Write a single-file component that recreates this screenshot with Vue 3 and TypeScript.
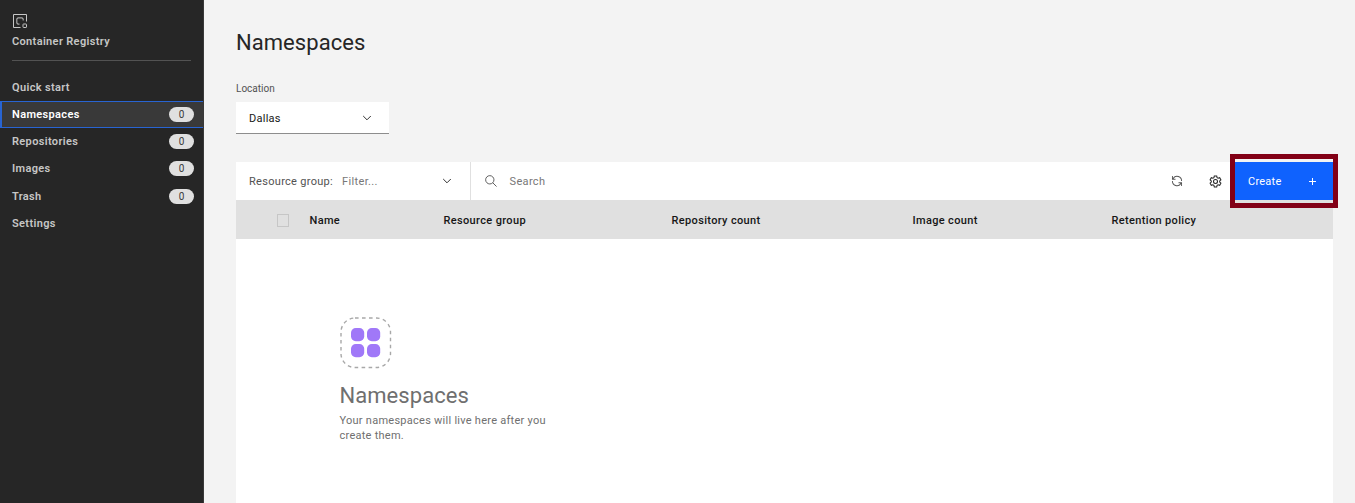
<script setup lang="ts">
interface NavItem {
  label: string
  count?: number
  active?: boolean
}

const navItems: NavItem[] = [
  { label: 'Quick start' },
  { label: 'Namespaces', count: 0, active: true },
  { label: 'Repositories', count: 0 },
  { label: 'Images', count: 0 },
  { label: 'Trash', count: 0 },
  { label: 'Settings' },
]

const columns: string[] = ['Name', 'Resource group', 'Repository count', 'Image count', 'Retention policy']
</script>

<template>
  <div class="shell">
    <aside class="sidebar">
      <header class="brand">
        <svg class="brand-icon" width="16" height="16" viewBox="0 0 16 16" fill="none" stroke="#c6c6c6">
          <path d="M8.5 14.5H1.5V1.5H14.5V8.5" />
          <path d="M7.5 11.2H6L4.8 10V6L6 4.8H10L11.2 6V7.5" stroke="#a8a8a8" stroke-width="1.2" />
          <rect x="11" y="11" width="3.5" height="3.5" rx=".6" />
        </svg>
        <div class="brand-name">Container Registry</div>
      </header>
      <nav class="nav">
        <a v-for="item in navItems" :key="item.label" class="nav-item" :class="{ active: item.active }">
          <span>{{ item.label }}</span>
          <span v-if="item.count !== undefined" class="count">{{ item.count }}</span>
        </a>
      </nav>
    </aside>

    <main class="content">
      <h1 class="title">Namespaces</h1>
      <label class="field-label">Location</label>
      <div class="dropdown">
        <span>Dallas</span>
        <svg width="10" height="6" viewBox="0 0 10 6" fill="none" stroke="#333"><path d="M1.2 1 5 4.8 8.8 1" /></svg>
      </div>

      <section class="table">
        <div class="toolbar">
          <div class="filter">
            <span class="filter-label">Resource group:</span>
            <span class="placeholder">Filter...</span>
            <svg class="filter-chevron" width="10" height="6" viewBox="0 0 10 6" fill="none" stroke="#333"><path d="M1.2 1 5 4.8 8.8 1" /></svg>
          </div>
          <div class="search">
            <svg width="12" height="12" viewBox="0 0 13 13" fill="none" stroke="#525252">
              <circle cx="5.2" cy="5.2" r="4.5" />
              <path d="M8.4 8.4 12.5 12.5" />
            </svg>
            <span class="placeholder">Search</span>
          </div>
          <svg class="refresh" width="12" height="12" viewBox="0 0 32 32" fill="#555">
            <path d="M12 10H6.78A11 11 0 0 1 27 16h2.4A13.4 13.4 0 0 0 5 7.9V2.5H2.6V12.4H12zM20 22h5.22A11 11 0 0 1 5 16H2.6A13.4 13.4 0 0 0 27 24.1v5.4h2.4V19.6H20z" />
          </svg>
          <svg class="gear" width="13" height="13" viewBox="0 0 13 13" fill="none" stroke="#262626" stroke-width="1.05">
            <path d="M5.3 1h2.4l.4 1.6 1 .6 1.6-.5 1.2 2.1-1.2 1.1v1.2l1.2 1.1-1.2 2.1-1.6-.5-1 .6-.4 1.6H5.3l-.4-1.6-1-.6-1.6.5-1.2-2.1 1.2-1.1V5.9L1.1 4.8l1.2-2.1 1.6.5 1-.6z" />
            <circle cx="6.5" cy="6.5" r="2" />
          </svg>
          <button class="create">
            <span>Create</span>
            <svg width="7" height="7" viewBox="0 0 7 7" fill="none" stroke="#fff"><path d="M3.5 0v7M0 3.5h7" /></svg>
            <span class="highlight"></span>
          </button>
        </div>
        <div class="thead">
          <span><i class="checkbox"></i></span>
          <span v-for="column in columns" :key="column" class="column">{{ column }}</span>
        </div>
        <div class="empty">
          <svg width="52" height="52" viewBox="0 0 52 52">
            <rect x="1" y="1" width="49.5" height="49.5" rx="14" fill="none" stroke="#a8a8a8" stroke-width="1.4" stroke-dasharray="3.6 3.4" />
            <g fill="#a078f8">
              <rect x="11" y="11" width="13.2" height="13.2" rx="4.8" />
              <rect x="27" y="11" width="13.2" height="13.2" rx="4.8" />
              <rect x="11" y="27" width="13.2" height="13.2" rx="4.8" />
              <rect x="27" y="27" width="13.2" height="13.2" rx="4.8" />
            </g>
          </svg>
          <h2>Namespaces</h2>
          <p>Your namespaces will live here after you<br />create them.</p>
        </div>
      </section>
    </main>
  </div>
</template>

<style>
body {
  margin: 0;
  overflow: hidden;
}
</style>

<style scoped>
.shell {
  display: flex;
  width: 1355px;
  height: 503px;
  overflow: hidden;
  background: #f3f3f3;
  color: #161616;
  font-family: Roboto, "Liberation Sans", sans-serif;
  font-size: 11px;
  line-height: 15px;
  letter-spacing: 0.35px;
  box-sizing: border-box;
}
.shell * {
  box-sizing: border-box;
}
.sidebar {
  flex: none;
  width: 204px;
  background: #262626;
  border-right: 1px solid #393939;
  color: #c6c6c6;
  font-weight: 600;
}
.brand {
  height: 61px;
  margin: 0 12px;
  padding-top: 13px;
  border-bottom: 1px solid #525252;
}
.brand-icon {
  display: block;
}
.brand-name {
  margin-top: 5px;
  letter-spacing: 0.35px;
}
.nav {
  padding-top: 12.8px;
}
.nav-item {
  display: flex;
  align-items: center;
  justify-content: space-between;
  height: 27.2px;
  padding: 0 9px 0 12px;
}
.nav-item.active {
  padding-left: 10px;
  background: #393939;
  border: 1px solid #2864d2;
  border-width: 1px 0 1px 2px;
  color: #fff;
}
.count {
  width: 25px;
  height: 15px;
  border-radius: 8px;
  background: #e0e0e0;
  color: #393939;
  font-size: 10px;
  font-weight: 400;
  letter-spacing: 0;
  line-height: 15px;
  text-align: center;
}
.content {
  flex: 1;
  padding: 28px 22px 0 32px;
}
.title {
  margin: 0;
  color: #262626;
  font-size: 22px;
  font-weight: 400;
  line-height: 30px;
  letter-spacing: 0.05px;
}
.field-label {
  display: block;
  margin-top: 23px;
  color: #525252;
  font-size: 10px;
  letter-spacing: 0;
}
.dropdown {
  display: flex;
  align-items: center;
  justify-content: space-between;
  width: 153px;
  height: 32px;
  margin-top: 6px;
  padding: 1px 17px 0 13px;
  background: #fff;
  border-bottom: 1px solid #8d8d8d;
  letter-spacing: 0.25px;
}
.table {
  height: 341px;
  margin-top: 28px;
  background: #fff;
}
.toolbar {
  display: flex;
  align-items: center;
  height: 38px;
}
.filter {
  display: flex;
  align-items: center;
  width: 235px;
  height: 38px;
  padding: 0 18px 0 13px;
  border-right: 1px solid #e0e0e0;
}
.filter-label {
  color: #525252;
  letter-spacing: 0.3px;
}
.placeholder {
  color: #777;
}
.filter .placeholder {
  margin-left: 9px;
}
.filter-chevron {
  margin-left: auto;
}
.search {
  display: flex;
  flex: 1;
  align-items: center;
  gap: 13px;
  padding-left: 13.5px;
}
.refresh {
  margin-right: 26px;
}
.gear {
  margin-right: 13px;
}
.create {
  position: relative;
  display: flex;
  align-items: center;
  justify-content: space-between;
  width: 98px;
  height: 38px;
  padding: 0 17px 0 13px;
  border: 0;
  background: #0f62fe;
  color: #fff;
  font: inherit;
  letter-spacing: 0.25px;
}
.highlight {
  position: absolute;
  inset: -8px -5px;
  border: 5px solid #820016;
}
.thead {
  display: grid;
  grid-template-columns: 73.5px 134px 228px 241px 199px 1fr;
  align-items: center;
  height: 39px;
  background: #e0e0e0;
  font-weight: 500;
}
.column {
  padding-top: 2px;
}
.checkbox {
  display: block;
  width: 12px;
  height: 13px;
  margin-top: 1px;
  margin-left: 41px;
  border: 1px solid #c6c6c6;
}
.empty {
  padding: 78px 0 0 103.5px;
  color: #6f6f6f;
}
.empty svg {
  display: block;
}
.empty h2 {
  margin: 12px 0 2px;
  font-size: 22px;
  font-weight: 400;
  line-height: 30px;
  letter-spacing: 0.05px;
}
.empty p {
  margin: 0;
  letter-spacing: 0.26px;
}
</style>
